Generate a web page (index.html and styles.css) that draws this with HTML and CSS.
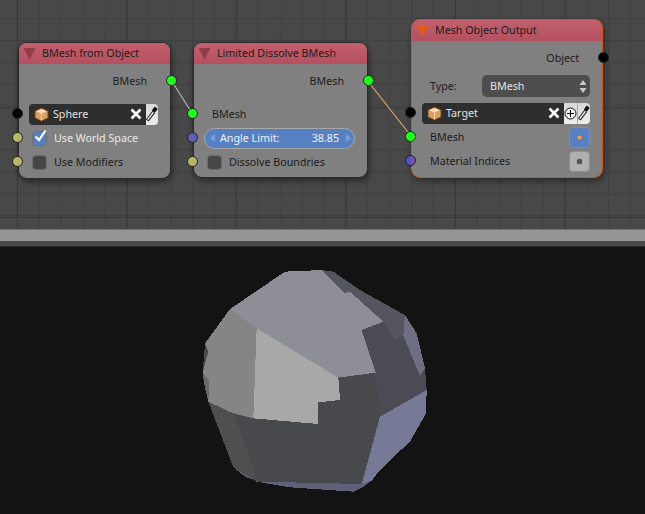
FILE: index.html
```html
<!DOCTYPE html>
<html lang="en">
<head>
  <meta charset="UTF-8">
  <title>Mesh nodes</title>
  <link rel="stylesheet" href="styles.css">
</head>
<body>
  <svg class="defs" width="0" height="0">
    <symbol id="cube" viewBox="0 0 14 14">
      <path d="M7 .6 13.200 3.400v7.200L7 13.400 .8 10.600V3.400z" fill="#d8a062" stroke="#57330f" stroke-width="1"/>
      <path d="M7 1.800 11.800 4 7 6.200 2.200 4z" fill="#f6dcb8"/>
      <path d="M7 6.400v6.400" stroke="#f0d2a8" stroke-width="1"/>
    </symbol>
    <symbol id="cross" viewBox="0 0 12 12">
      <path d="M1.500 1.500 10.500 10.500M10.500 1.500 1.500 10.500" stroke="#fff" stroke-width="2.600" fill="none"/>
    </symbol>
    <symbol id="dropper" viewBox="0 0 14 18">
      <path d="M1.500 16.500 9 6.500" stroke="#1c1c1c" stroke-width="4" fill="none"/>
      <path d="M2 15.800 8.600 7" stroke="#e4e4e4" stroke-width="1.800" fill="none"/>
      <path d="M8.500 6 12 1.800" stroke="#111" stroke-width="4.400" fill="none"/>
    </symbol>
  </svg>

  <div class="editor">
    <svg class="wires" width="645" height="229">
      <line x1="171" y1="80" x2="192" y2="113" stroke="#b4b4b4" stroke-width="1.200"/>
      <line x1="367" y1="80" x2="411" y2="136" stroke="#e0a860" stroke-width="1.200"/>
    </svg>

    <div class="node node-from">
      <div class="node-head">
        <svg class="arrow" width="13" height="13" viewBox="0 0 12 12"><path d="M.5 1h11L6 11.500z"/></svg>
        <span class="label">BMesh from Object</span>
      </div>
      <div class="row row-out">
        <span class="label">BMesh</span>
        <i class="socket out green"></i>
      </div>
      <div class="row row-gap">
        <i class="socket in black"></i>
        <div class="objfield">
          <svg class="cube" width="15" height="15"><use href="#cube"/></svg>
          <span class="label objname">Sphere</span>
          <svg class="cross" width="12" height="12"><use href="#cross"/></svg>
        </div>
        <div class="objbtn"><svg width="12" height="16"><use href="#dropper"/></svg></div>
      </div>
      <div class="row">
        <i class="socket in olive"></i>
        <span class="check on"><svg width="16" height="16" viewBox="0 0 16 16"><path d="M3.500 7.500 7 11 13.500 1.500" stroke="#fff" stroke-width="2.200" fill="none"/></svg></span>
        <span class="label light">Use World Space</span>
      </div>
      <div class="row">
        <i class="socket in olive"></i>
        <span class="check"></span>
        <span class="label">Use Modifiers</span>
      </div>
    </div>

    <div class="node node-dissolve">
      <div class="node-head">
        <svg class="arrow" width="13" height="13" viewBox="0 0 12 12"><path d="M.5 1h11L6 11.500z"/></svg>
        <span class="label">Limited Dissolve BMesh</span>
      </div>
      <div class="row row-out">
        <span class="label">BMesh</span>
        <i class="socket out green"></i>
      </div>
      <div class="row row-gap row-text">
        <i class="socket in green"></i>
        <span class="label">BMesh</span>
      </div>
      <div class="row">
        <i class="socket in blue"></i>
        <div class="slider">
          <i class="tri-l"></i>
          <span class="label">Angle Limit:</span>
          <span class="label value">38.85</span>
          <i class="tri-r"></i>
        </div>
      </div>
      <div class="row">
        <i class="socket in olive"></i>
        <span class="check"></span>
        <span class="label">Dissolve Boundries</span>
      </div>
    </div>

    <div class="node node-output">
      <div class="node-head">
        <svg class="arrow" width="13" height="13" viewBox="0 0 12 12"><path d="M.5 1h11L6 11.500z"/></svg>
        <span class="label">Mesh Object Output</span>
      </div>
      <div class="row row-out">
        <span class="label">Object</span>
        <i class="socket out black"></i>
      </div>
      <div class="row row-type">
        <span class="label">Type:</span>
        <div class="select">
          <span class="label">BMesh</span>
          <svg width="8" height="15" viewBox="0 0 8 15"><path d="M4 1 7.500 6H.5zM4 14 .5 9h7z" fill="#c8c8c8"/></svg>
        </div>
      </div>
      <div class="row">
        <i class="socket in black"></i>
        <div class="objfield">
          <svg class="cube" width="15" height="15"><use href="#cube"/></svg>
          <span class="label objname">Target</span>
          <svg class="cross" width="12" height="12"><use href="#cross"/></svg>
        </div>
        <div class="objbtn plus">
          <svg width="13" height="13" viewBox="0 0 13 13"><circle cx="6.500" cy="6.500" r="5.500" fill="#eee" stroke="#111"/><path d="M6.500 3v7M3 6.500h7" stroke="#111"/></svg>
        </div>
        <div class="objbtn"><svg width="12" height="16"><use href="#dropper"/></svg></div>
      </div>
      <div class="row row-text">
        <i class="socket in green"></i>
        <span class="label">BMesh</span>
        <span class="swatch active"><i></i></span>
      </div>
      <div class="row row-text">
        <i class="socket in blue mixed"></i>
        <span class="label">Material Indices</span>
        <span class="swatch"><i></i></span>
      </div>
    </div>
  </div>

  <div class="splitter"></div>

  <div class="viewport">
    <svg class="mesh" width="250" height="240" viewBox="0 0 750 720">
      <polygon fill="#4a4a4e" points="120,147 285,35 395,30 510,90 645,165 680,220 705,325 710,390 708,460 660,545 600,600 570,630 545,662 520,680 490,695 300,682 200,665 130,622 55,425 38,338 45,250"/>
      <polygon fill="#8e8e96" points="120,147 285,35 395,30 480,95 580,185 515,210 557,338 445,353 200,205"/>
      <polygon fill="#55555f" points="395,30 430,35 510,90 645,165 640,228 615,238 580,185 480,95 465,100"/>
      <polygon fill="#4b4a55" points="515,210 580,185 615,238 640,228 690,348 705,325 710,390 580,465 570,470 557,338"/>
      <polygon fill="#6e6f83" points="645,165 680,220 705,325 690,348 640,228"/>
      <polygon fill="#858585" points="120,147 200,205 190,475 130,460 55,425 58,360 38,338 55,275 45,250"/>
      <polygon fill="#6a6a6a" points="38,338 58,360 55,425 42,370"/>
      <polygon fill="#a8a8a8" points="200,205 445,353 450,420 385,427 385,492 190,475"/>
      <polygon fill="#48494c" points="445,353 557,338 570,470 515,672 205,665 130,460 190,475 385,492 385,427 450,420"/>
      <polygon fill="#4f4f4f" points="55,425 130,460 205,665 130,622"/>
      <polygon fill="#777a96" points="710,390 708,460 660,545 600,600 570,630 545,662 515,672 570,470"/>
      <polygon fill="#5e6177" points="130,622 165,650 205,665 515,672 545,662 520,680 490,695 300,682 200,665"/>
    </svg>
  </div>
</body>
</html>
```

FILE: styles.css
```css
body{
  margin: 0;
  width: 645px;
  height: 514px;
  display: flex;
  flex-direction: column;
  overflow: hidden;
  font-family: "Noto Sans", sans-serif;
  font-size: 10.7px;
  color: #1c1c1c;
}
.defs{
  position: absolute;
}

/* node editor */
.editor{
  position: relative;
  height: 229px;
  background-color: #484848;
  background-image:
    linear-gradient(to right, #373737 1px, transparent 1px),
    linear-gradient(to bottom, #373737 1px, transparent 1px),
    linear-gradient(to right, #404040 1px, transparent 1px),
    linear-gradient(to bottom, #404040 1px, transparent 1px);
  background-size: 109.5px 109.5px, 109.5px 109.5px, 21.9px 21.9px, 21.9px 21.9px;
  background-position: 17px 0, 0 -2px, 17px 0, 0 18px;
}
.wires{
  position: absolute;
  left: 0;
  top: 0;
  z-index: 2;
}
.node{
  position: absolute;
  box-sizing: border-box;
  background: #808080;
  border: 1px solid #2a2a2a;
  border-radius: 9px;
  box-shadow: 1px 3px 6px rgba(0,0,0,.45);
}
.node-from{
  left: 18px;
  top: 42px;
  width: 153px;
  height: 137px;
}
.node-dissolve{
  left: 193px;
  top: 42px;
  width: 175px;
  height: 136px;
}
.node-output{
  left: 411px;
  top: 19px;
  width: 192px;
  height: 159px;
  border-color: #d2570f;
}
.node-head{
  height: 21px;
  display: flex;
  align-items: center;
  gap: 6px;
  padding-left: 4px;
  border-radius: 8px 8px 0 0;
  background: linear-gradient(#c3606d, #b4505f);
}
.arrow{
  fill: #8f3c48;
  flex: none;
}
.node-output .arrow{
  fill: #e05c10;
}

/* rows, sockets sit on the node edge */
.row{
  position: relative;
  height: 24px;
  display: flex;
  align-items: center;
  padding: 0 12px 0 10px;
}
.row-out{
  justify-content: flex-end;
  margin-top: 5px;
  padding-right: 23px;
}
.row-gap{
  margin-top: 9px;
}
.row-text{
  padding-left: 18px;
}
.row-type{
  margin: 4px 0 3px;
  padding-left: 18px;
}
.label{
  white-space: nowrap;
  padding-bottom: 1px;
}
.light{
  color: #eaeaea;
}
.socket{
  position: absolute;
  top: 50%;
  width: 11px;
  height: 11px;
  margin-top: -6px;
  box-sizing: border-box;
  border: 1px solid #1e1e1e;
  border-radius: 50%;
  z-index: 3;
}
.in{
  left: -7px;
}
.out{
  right: -7px;
}
.green{
  background: #1eff1e;
}
.black{
  background: #000;
}
.olive{
  background: #b8b468;
}
.blue{
  background: #5f5fb2;
}
.mixed{
  background: linear-gradient(to right, #5353c4 55%, #8a4f9c 55%);
}

/* widgets */
.objfield{
  flex: 1;
  height: 21px;
  display: flex;
  align-items: center;
  padding: 0 4px 0 5px;
  background: #2e2e2e;
  border-radius: 4px 0 0 4px;
  color: #e2e2e2;
}
.objname{
  flex: 1;
  margin-left: 4px;
}
.objbtn{
  width: 12px;
  height: 21px;
  display: flex;
  align-items: center;
  justify-content: center;
  background: linear-gradient(#d8d8d8, #eeeeee);
  border-radius: 0 4px 4px 0;
}
.objbtn.plus{
  width: 13px;
  border-radius: 0;
  border-right: 1px solid #aaa;
}
.check{
  width: 15px;
  height: 15px;
  margin: 0 7px 0 3px;
  flex: none;
  position: relative;
  box-sizing: border-box;
  background: #464646;
  border: 1px solid #6c6c6c;
  border-radius: 4px;
}
.check.on{
  background: #5680c2;
}
.check svg{
  position: absolute;
  left: -1px;
  top: -3px;
}
.slider{
  flex: 1;
  height: 21px;
  display: flex;
  align-items: center;
  gap: 3px;
  padding: 0 3px 0 5px;
  box-sizing: border-box;
  background: #5680c2;
  border: 1px solid #a8a8a8;
  border-radius: 11px;
  color: #f2f2f2;
}
.value{
  margin-left: auto;
}
.tri-l, .tri-r{
  width: 0;
  height: 0;
  border-top: 4px solid transparent;
  border-bottom: 4px solid transparent;
}
.tri-l{
  border-right: 5px solid #7b9fd6;
  margin-right: 2px;
}
.tri-r{
  border-left: 5px solid #7b9fd6;
  margin-left: 4px;
}
.select{
  margin-left: auto;
  width: 108px;
  height: 22px;
  box-sizing: border-box;
  display: flex;
  align-items: center;
  justify-content: space-between;
  padding: 0 3px 0 8px;
  background: #4d4d4d;
  border-radius: 5px;
  color: #e4e4e4;
}
.swatch{
  margin-left: auto;
  width: 21px;
  height: 21px;
  box-sizing: border-box;
  display: flex;
  align-items: center;
  justify-content: center;
  background: #b0b0b0;
  border: 1px solid #8e8e8e;
  border-radius: 4px;
}
.swatch i{
  width: 5px;
  height: 5px;
  border-radius: 50%;
  background: #555;
  box-shadow: 0 0 1px #222;
}
.swatch.active{
  background: #5680c2;
}
.swatch.active i{
  background: #e89a3c;
}

/* splitter between the editors */
.splitter{
  height: 17px;
  box-sizing: border-box;
  background: #969696;
  border-top: 1px solid #707070;
  border-bottom: 5px solid #4a4a4a;
}

/* 3d view */
.viewport{
  flex: 1;
  background: #131313;
  border-top: 1px solid #2a2a2a;
}
.mesh{
  display: block;
  margin: 13px 0 0 190px;
  shape-rendering: crispEdges;
}
```
